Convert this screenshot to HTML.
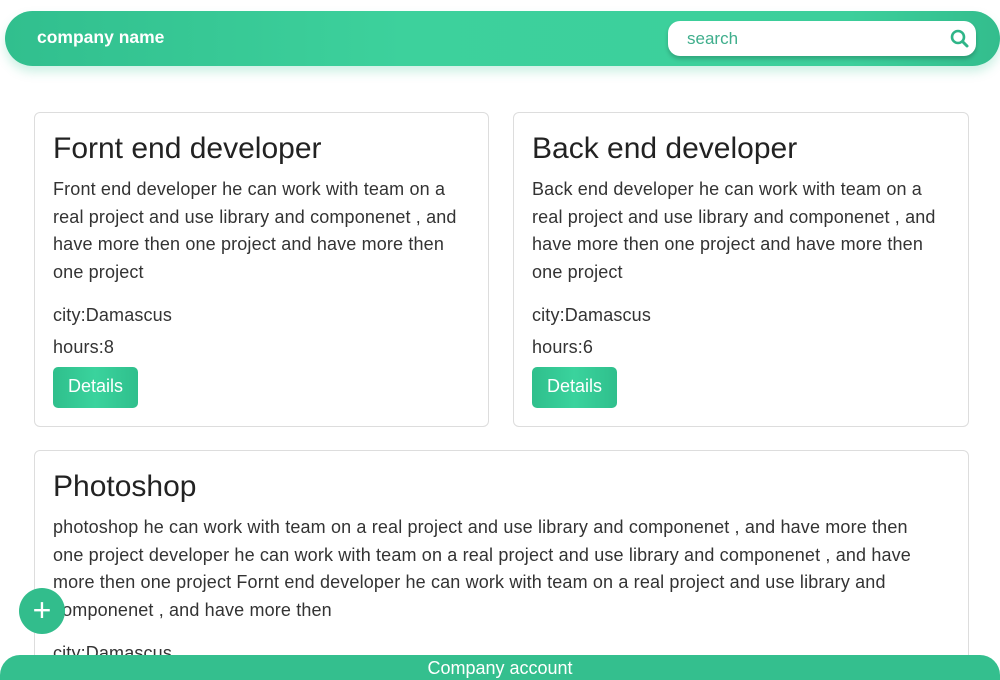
<!DOCTYPE html>
<html style="overflow:hidden;height:680px"><head><meta charset="utf-8"><style>
*{box-sizing:border-box;margin:0;padding:0}
body{width:1000px;height:680px;overflow:hidden;background:#fff;font-family:"Liberation Sans",sans-serif;color:#333;position:relative}
.nav{position:absolute;left:5px;top:11px;width:995px;height:55px;border-radius:28px;background:linear-gradient(90deg,#31bf8e,#3dd19c 40%,#3ccf9b 85%,#33bd8d);box-shadow:0 6px 10px rgba(60,200,150,.25)}
.brand{position:absolute;left:32px;top:16px;color:#fff;font-weight:bold;font-size:17.5px}
.search{position:absolute;left:663px;top:10px;width:308px;height:35px;background:#fff;border-radius:12px;box-shadow:0 3px 4px rgba(0,0,0,.2)}
.search span{position:absolute;left:19px;top:8px;color:#3fae8c;font-size:17px}
.search svg{position:absolute;right:6px;top:8px}
.card{position:absolute;border:1px solid #ddd;border-radius:6px;background:#fff}
.card h2{position:absolute;left:18px;top:19px;font-weight:normal;font-size:30px;color:#222;white-space:nowrap}
.card p{position:absolute;left:18px;white-space:nowrap;font-size:18px;letter-spacing:0.15px;color:#333}
.desc{top:63px;line-height:27.5px}
.btn{position:absolute;left:18px;top:254px;width:85px;height:41px;border-radius:5px;background:linear-gradient(90deg,#2fbf8c,#3ad39d,#2fbf8c);color:#fff;font-size:18px;text-align:center;line-height:39px}
.fab{position:absolute;left:19px;top:588px;width:46px;height:46px;border-radius:50%;background:#32bd8c;color:#fff;font-size:32px;text-align:center;line-height:44px}
.foot{position:absolute;left:0;top:655px;width:1000px;height:25px;background:#34bf8e;border-radius:20px 20px 0 0;color:#fff;text-align:center;font-size:18px;line-height:26px}
</style></head><body>
<div class="nav"><div class="brand">company name</div>
<div class="search"><span>search</span><svg width="20" height="20" viewBox="0 0 20 20"><circle cx="8" cy="8" r="6" fill="none" stroke="#2fb588" stroke-width="2.6"/><path d="M12.5 12.5L17 17" stroke="#2fb588" stroke-width="3" stroke-linecap="round"/></svg></div></div>

<div class="card" style="left:34px;top:112px;width:455px;height:315px">
<h2>Fornt end developer</h2>
<p class="desc">Front end developer he can work with team on a<br>real project and use library and componenet , and<br>have more then one project and have more then<br>one project</p>
<p style="top:192px">city:Damascus</p>
<p style="top:224px">hours:8</p>
<div class="btn">Details</div></div>

<div class="card" style="left:513px;top:112px;width:456px;height:315px">
<h2>Back end developer</h2>
<p class="desc">Back end developer he can work with team on a<br>real project and use library and componenet , and<br>have more then one project and have more then<br>one project</p>
<p style="top:192px">city:Damascus</p>
<p style="top:224px">hours:6</p>
<div class="btn">Details</div></div>

<div class="card" style="left:34px;top:450px;width:935px;height:240px">
<h2>Photoshop</h2>
<p class="desc">photoshop he can work with team on a real project and use library and componenet , and have more then<br>one project developer he can work with team on a real project and use library and componenet , and have<br>more then one project Fornt end developer he can work with team on a real project and use library and<br>componenet , and have more then</p>
<p style="top:192px">city:Damascus</p></div>

<div class="fab">+</div>
<div class="foot">Company account</div>
</body></html>
